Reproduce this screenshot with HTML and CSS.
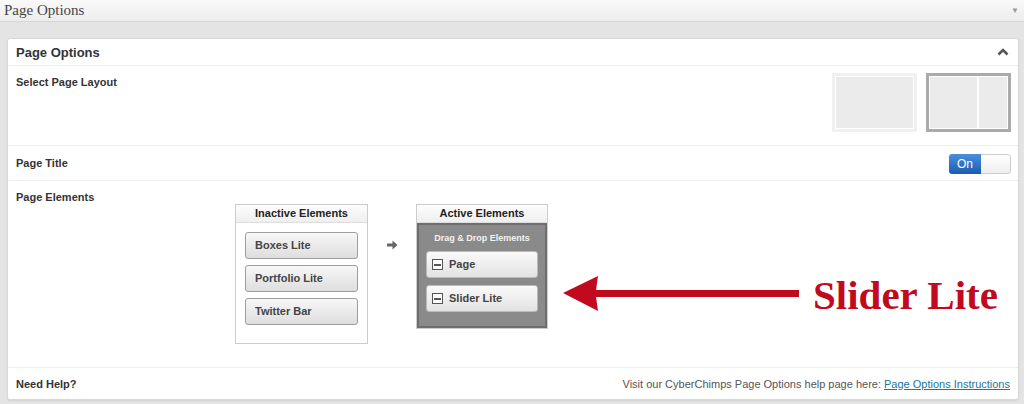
FILE: index.html
```html
<!DOCTYPE html>
<html lang="en">
<head>
    <meta charset="UTF-8">
    <title>Page Options</title>
    <link rel="stylesheet" href="styles.css">
</head>
<body>
    <div class="topbar">
        <span class="topbar-title">Page Options</span>
        <span class="topbar-toggle">&#9660;</span>
    </div>
    <div class="wrap">
        <div class="panel">
            <div class="panel-head">
                <h3>Page Options</h3>
                <svg class="chevron" width="12" height="9" viewBox="0 0 12 9">
                    <path d="M1.5 7.5 L6 3 L10.5 7.5" fill="none" stroke="#555" stroke-width="2.6"/>
                </svg>
            </div>
            <div class="row row-layout">
                <span class="label">Select Page Layout</span>
                <div class="layouts">
                    <div class="layout"><div class="pane"></div></div>
                    <div class="layout selected"><div class="pane"></div><div class="pane side"></div></div>
                </div>
            </div>
            <div class="row row-title">
                <span class="label">Page Title</span>
                <div class="toggle"><span class="toggle-on">On</span><span class="toggle-off"></span></div>
            </div>
            <div class="row row-elements">
                <span class="label">Page Elements</span>
                <div class="elements">
                    <div class="box inactive">
                        <div class="box-head">Inactive Elements</div>
                        <div class="box-body">
                            <div class="item">Boxes Lite</div>
                            <div class="item">Portfolio Lite</div>
                            <div class="item">Twitter Bar</div>
                        </div>
                    </div>
                    <div class="move-arrow">
                        <svg width="11" height="10" viewBox="0 0 11 10">
                            <path d="M0 3.5 H5.5 V0.5 L10.5 5 L5.5 9.5 V6.5 H0 Z" fill="#666"/>
                        </svg>
                    </div>
                    <div class="box active">
                        <div class="box-head">Active Elements</div>
                        <div class="box-body">
                            <div class="drag-note">Drag &amp; Drop Elements</div>
                            <div class="item"><span class="minus"></span>Page</div>
                            <div class="item"><span class="minus"></span>Slider Lite</div>
                        </div>
                    </div>
                    <div class="callout">
                        <svg width="240" height="36" viewBox="0 0 240 36">
                            <path d="M0 17 L35 0 L33 14 L236 14 L236 21 L33 21 L35 35 Z" fill="#c20a1f"/>
                        </svg>
                        <span class="callout-text">Slider Lite</span>
                    </div>
                </div>
            </div>
            <div class="row row-help">
                <span class="label">Need Help?</span>
                <span class="help-text">Visit our CyberChimps Page Options help page here: <a href="#">Page Options Instructions</a></span>
            </div>
        </div>
    </div>
</body>
</html>
```

FILE: styles.css
```css
body {
    margin: 0;
    font-family: "Liberation Sans", Arial, sans-serif;
    font-size: 11px;
    color: #333;
    background-color: #e4e4e4;
    height: 404px;
    overflow: hidden;
}
.topbar {
    height: 21px;
    display: flex;
    align-items: center;
    justify-content: space-between;
    padding: 0 4px;
    background: linear-gradient(#fafafa, #ececec);
    border-bottom: 1px solid #d6d6d6;
}
.topbar-title { font-family: "Liberation Serif", "Times New Roman", serif; font-size: 15px; color: #464646; }
.topbar-toggle { font-size: 8px; color: #999; padding-right: 1px; }
.wrap { padding: 16px 5px 0 7px; }
.panel {
    background-color: #fff;
    border: 1px solid #d8d8d8;
    border-radius: 3px;
    box-shadow: 0 1px 2px rgba(0,0,0,0.08);
}
.panel-head {
    height: 26px;
    display: flex;
    align-items: center;
    justify-content: space-between;
    padding: 0 9px 0 8px;
    border-bottom: 1px solid #eee;
}
.panel-head h3 { margin: 0; font-size: 13px; font-weight: bold; color: #333; }
.chevron { margin-top: -1px; }
.row {
    display: flex;
    justify-content: space-between;
    align-items: flex-start;
    padding: 0 7px 0 8px;
    border-bottom: 1px solid #eee;
}
.label { font-weight: bold; font-size: 11px; color: #333; line-height: 14px; }
.row-layout { height: 79px; }
.row-layout .label { margin-top: 9px; }
.layouts { display: flex; gap: 9px; margin-top: 7px; }
.layout {
    width: 77px;
    height: 51px;
    border: 3px solid #f0f0f0;
    display: flex;
    gap: 2px;
    background-color: #fff;
    padding: 1px;
}
.layout.selected { border-color: #aaa; }
.pane { flex: 1; background-color: #ebebeb; }
.pane.side { flex: 0 0 28px; }
.row-title { height: 34px; align-items: center; }
.toggle {
    display: flex;
    width: 62px;
    height: 20px;
    margin-top: 1px;
    border-radius: 3px;
    overflow: hidden;
}
.toggle-on {
    width: 32px;
    background: linear-gradient(#4a8fdc, #1a5cb0);
    color: #fff;
    font-size: 12px;
    text-align: center;
    line-height: 20px;
}
.toggle-off { flex: 1; background: linear-gradient(#fff, #eee); border: 1px solid #ccc; border-left: none; border-radius: 0 3px 3px 0; }
.row-elements { height: 186px; flex-direction: column; justify-content: flex-start; }
.row-elements .label { margin-top: 9px; }
.elements { display: flex; align-items: flex-start; padding-left: 219px; }
.box { width: 131px; border: 1px solid #ccc; background-color: #fff; }
.box-head {
    height: 17px;
    line-height: 17px;
    text-align: center;
    font-weight: bold;
    font-size: 11px;
    color: #222;
    background: linear-gradient(#fdfdfd, #efefef);
    border-bottom: 1px solid #ddd;
}
.box-body { display: flex; flex-direction: column; gap: 6px; padding: 9px 9px 18px; }
.item {
    height: 25px;
    line-height: 25px;
    padding-left: 9px;
    border: 1px solid #9d9d9d;
    border-radius: 3px;
    background: linear-gradient(#f7f7f7, #dedede);
    font-weight: bold;
    color: #444;
    display: flex;
    align-items: center;
    gap: 6px;
}
.move-arrow { width: 48px; display: flex; justify-content: center; margin-top: 36px; }
.box.active { width: 130px; }
.active .box-body {
    background-color: #8a8a8a;
    box-shadow: inset 0 0 0 2px #6e6e6e;
    padding: 9px 9px 16px;
    gap: 7px;
}
.drag-note { text-align: center; color: #f2f2f2; font-size: 9px; font-weight: bold; line-height: 12px; }
.active .item { border-color: #bbb; background: linear-gradient(#fafafa, #e2e2e2); padding-left: 5px; }
.minus {
    width: 9px;
    height: 9px;
    border: 1px solid #555;
    background: linear-gradient(#555, #555) center / 7px 2px no-repeat, #fff;
}
.callout { display: flex; align-items: center; gap: 10px; margin: 70px 0 0 15px; }
.callout-text {
    font-family: "Liberation Serif", "Times New Roman", serif;
    font-weight: bold;
    font-size: 41px;
    color: #c20a1f;
    line-height: 36px;
    margin-top: 3px;
}
.row-help { height: 31px; align-items: center; border-bottom: none; }
.help-text { color: #555; font-size: 11px; padding-right: 1px; }
.help-text a { color: #21759b; }
```
